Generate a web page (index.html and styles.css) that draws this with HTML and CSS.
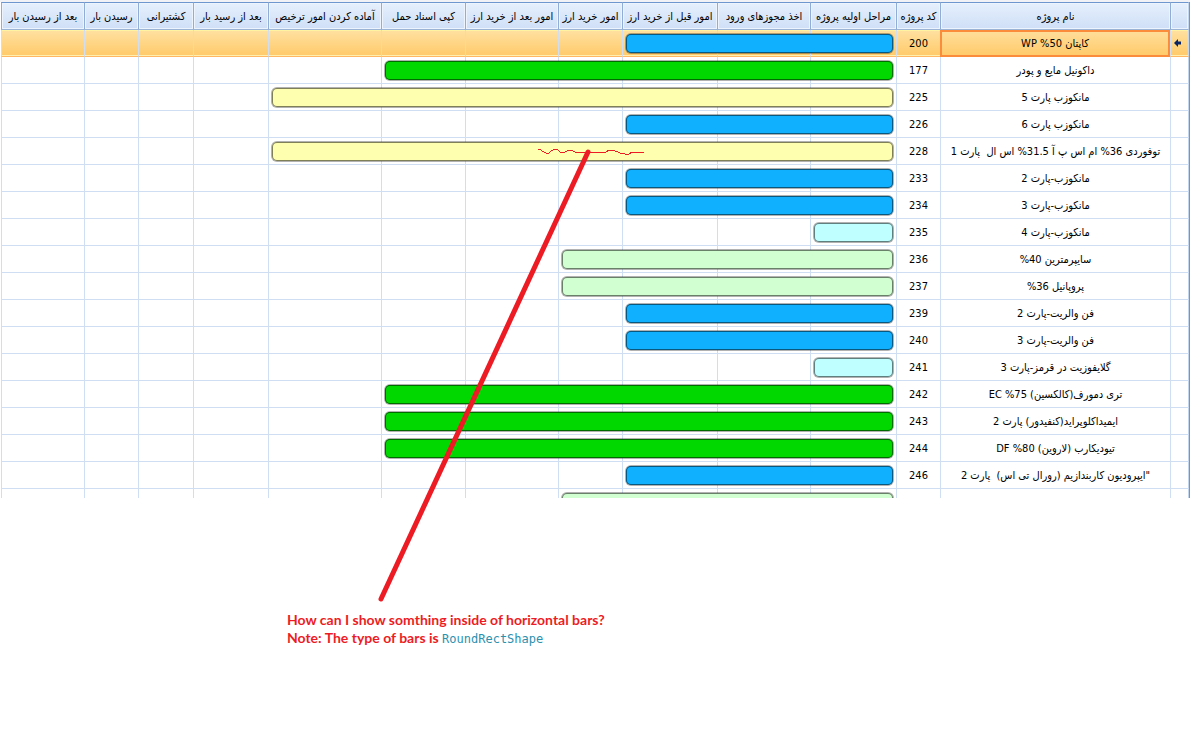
FILE: index.html
```
<!DOCTYPE html>
<html lang="fa">
<head>
<meta charset="utf-8">
<title>مراحل پروژه</title>
<link rel="stylesheet" href="styles.css">
</head>
<body>
<main class="page">
<div class="grid-view">
<table class="grid" dir="rtl">
<colgroup>
<col class="c-mark"><col class="c-name"><col class="c-code"><col class="c-s1"><col class="c-s2"><col class="c-s3"><col class="c-s4"><col class="c-s5"><col class="c-s6"><col class="c-s7"><col class="c-s8"><col class="c-s9"><col class="c-s10"><col class="c-s11">
</colgroup>
<thead>
<tr><th></th><th scope="col">نام پروژه</th><th scope="col">کد پروژه</th><th scope="col">مراحل اولیه پروژه</th><th scope="col">اخذ مجوزهای ورود</th><th scope="col">امور قبل از خرید ارز</th><th scope="col">امور خرید ارز</th><th scope="col">امور بعد از خرید ارز</th><th scope="col">کپی اسناد حمل</th><th scope="col">آماده کردن امور ترخیص</th><th scope="col">بعد از رسید بار</th><th scope="col">کشتیرانی</th><th scope="col">رسیدن بار</th><th scope="col">بعد از رسیدن بار</th></tr>
</thead>
<tbody>
<tr class="selected"><td><svg class="marker" viewBox="0 0 7 8" width="7" height="8"><path d="M0 4L4 0V2.500H7V5.500H4V8Z" fill="#0a2463"/></svg></td><td class="current">کاپتان 50% WP</td><td>200</td><td class="stage"><div class="bar blue"></div></td><td></td><td></td><td></td><td></td><td></td><td></td><td></td><td></td><td></td><td></td></tr>
<tr><td></td><td>داکونیل مایع و پودر</td><td>177</td><td class="stage"><div class="bar green"></div></td><td></td><td></td><td></td><td></td><td></td><td></td><td></td><td></td><td></td><td></td></tr>
<tr><td></td><td>مانکوزب پارت 5</td><td>225</td><td class="stage"><div class="bar yellow"></div></td><td></td><td></td><td></td><td></td><td></td><td></td><td></td><td></td><td></td><td></td></tr>
<tr><td></td><td>مانکوزب پارت 6</td><td>226</td><td class="stage"><div class="bar blue"></div></td><td></td><td></td><td></td><td></td><td></td><td></td><td></td><td></td><td></td><td></td></tr>
<tr><td></td><td>توفوردی 36% ام اس پ آ 31.5% اس ال &nbsp;پارت 1</td><td>228</td><td class="stage"><div class="bar yellow"></div></td><td></td><td></td><td></td><td></td><td></td><td></td><td></td><td></td><td></td><td></td></tr>
<tr><td></td><td>مانکوزب-پارت 2</td><td>233</td><td class="stage"><div class="bar blue"></div></td><td></td><td></td><td></td><td></td><td></td><td></td><td></td><td></td><td></td><td></td></tr>
<tr><td></td><td>مانکوزب-پارت 3</td><td>234</td><td class="stage"><div class="bar blue"></div></td><td></td><td></td><td></td><td></td><td></td><td></td><td></td><td></td><td></td><td></td></tr>
<tr><td></td><td>مانکوزب-پارت 4</td><td>235</td><td class="stage"><div class="bar cyan"></div></td><td></td><td></td><td></td><td></td><td></td><td></td><td></td><td></td><td></td><td></td></tr>
<tr><td></td><td>سایپرمترین 40%</td><td>236</td><td class="stage"><div class="bar mint"></div></td><td></td><td></td><td></td><td></td><td></td><td></td><td></td><td></td><td></td><td></td></tr>
<tr><td></td><td>پروپانیل 36%</td><td>237</td><td class="stage"><div class="bar mint"></div></td><td></td><td></td><td></td><td></td><td></td><td></td><td></td><td></td><td></td><td></td></tr>
<tr><td></td><td>فن والریت-پارت 2</td><td>239</td><td class="stage"><div class="bar blue"></div></td><td></td><td></td><td></td><td></td><td></td><td></td><td></td><td></td><td></td><td></td></tr>
<tr><td></td><td>فن والریت-پارت 3</td><td>240</td><td class="stage"><div class="bar blue"></div></td><td></td><td></td><td></td><td></td><td></td><td></td><td></td><td></td><td></td><td></td></tr>
<tr><td></td><td>گلایفوزیت در قرمز-پارت 3</td><td>241</td><td class="stage"><div class="bar cyan"></div></td><td></td><td></td><td></td><td></td><td></td><td></td><td></td><td></td><td></td><td></td></tr>
<tr><td></td><td>تری دمورف(کالکسین) 75% EC</td><td>242</td><td class="stage"><div class="bar green"></div></td><td></td><td></td><td></td><td></td><td></td><td></td><td></td><td></td><td></td><td></td></tr>
<tr><td></td><td>ایمیداکلوپراید(کنفیدور) پارت 2</td><td>243</td><td class="stage"><div class="bar green"></div></td><td></td><td></td><td></td><td></td><td></td><td></td><td></td><td></td><td></td><td></td></tr>
<tr><td></td><td>تیودیکارب (لاروین) 80% DF</td><td>244</td><td class="stage"><div class="bar green"></div></td><td></td><td></td><td></td><td></td><td></td><td></td><td></td><td></td><td></td><td></td></tr>
<tr><td></td><td>"ایپرودیون کاربندازیم (رورال تی اس) &nbsp;پارت 2</td><td>246</td><td class="stage"><div class="bar blue"></div></td><td></td><td></td><td></td><td></td><td></td><td></td><td></td><td></td><td></td><td></td></tr>
<tr><td></td><td></td><td></td><td class="stage"><div class="bar mint"></div></td><td></td><td></td><td></td><td></td><td></td><td></td><td></td><td></td><td></td><td></td></tr>
</tbody>
</table>
</div>
<section class="note" lang="en">
<p>How can I show somthing inside of horizontal bars?</p>
<p>Note: The type of bars is <code>RoundRectShape</code></p>
</section>
<svg class="pointer" width="700" height="610" viewBox="0 0 700 610" fill="none" stroke="#ed1c24">
<path d="M588 152L381 599" stroke-width="5" stroke-linecap="round"/>
<path shape-rendering="crispEdges" d="M538 149H540L542 151L546 153H549L551 151L555 149H557L560 152H565L569 150H571L575 152H606L609 150H613L620 153L625 154H629L632 152H644"/>
</svg>
</main>
</body>
</html>
```
FILE: styles.css
```
body {
  margin: 0;
  background: #fff;
  color: #000;
}

.page {
  position: relative;
}

/* Visible area of the grid; the rows continue below its edge */
.grid-view {
  box-sizing: border-box;
  height: 498px;
  overflow: hidden;
  padding: 2px 0 0 1px;
  background: linear-gradient(#f0f2f5 2px, #fff 2px);
}

.grid {
  width: 100%;
  table-layout: fixed;
  border-collapse: separate;
  border-spacing: 0;
  border-right: 1px solid #6f97cf;
  font: 11px/14px "DejaVu Sans Condensed", "DejaVu Sans", sans-serif;
  text-align: center;
  white-space: nowrap;
}

.c-mark { width: 19px; }
.c-name { width: 230px; }
.c-code { width: 44px; }
.c-s1 { width: 86px; }
.c-s2 { width: 93px; }
.c-s3 { width: 95px; }
.c-s4 { width: 64px; }
.c-s5 { width: 93px; }
.c-s6 { width: 84px; }
.c-s7 { width: 113px; }
.c-s8 { width: 75px; }
.c-s9 { width: 55px; }
.c-s10 { width: 54px; }
.c-s11 { width: 83px; }

.grid th,
.grid td {
  box-sizing: border-box;
  height: 27px;
  padding: 0;
  border-left: 1px solid #d0def4;
  border-bottom: 1px solid #d0def4;
}

.grid td {
  padding-top: 1px;
}

.grid th {
  height: 28px;
  padding-top: 1px;
  border-top: 1px solid #6f97cf;
  border-left-color: #8fadd6;
  border-bottom-color: #9bb4d5;
  background: linear-gradient(#e6f0fd, #cfdff7);
  box-shadow: inset 0 0 0 1px #edf4fd;
  font-weight: normal;
}

.grid th:first-child,
.grid td:first-child {
  border-right: 1px solid #c3d6f0;
}

.selected td {
  border-bottom-color: #ffb763;
  background: linear-gradient(#fff2a0 1px, #ffe0a0 1px, #ffcb6b 25px, #fff0b0 25px);
}

.grid .current {
  padding: 0;
  border: 2px solid #fb8c3c;
  background: linear-gradient(#ffdd99, #ffcb6b);
}

.marker {
  display: block;
  margin: 0 auto 2px 3px;
}

.stage {
  position: relative;
}

/* --span: bar length in widths of the first stage column */
.bar {
  position: absolute;
  z-index: 1;
  top: 3px;
  right: 2px;
  box-sizing: border-box;
  width: calc((100% + 1px) * var(--span) - 5px);
  height: 21px;
  border: 1px solid rgba(0, 0, 0, 0.3);
  border-radius: 6px;
  background: var(--fill);
  background-clip: padding-box;
  box-shadow: inset 0 0 0 1px var(--edge);
}

.cyan { --span: 1; --fill: #bfffff; --edge: #608080; }
.blue { --span: calc(274 / 86); --fill: #10b0ff; --edge: #085880; }
.mint { --span: calc(338 / 86); --fill: #d2ffd2; --edge: #698069; }
.green { --span: calc(515 / 86); --fill: #00d800; --edge: #006c00; }
.yellow { --span: calc(628 / 86); --fill: #ffffb0; --edge: #808058; }

.note {
  padding: 113px 0 0 287px;
  color: #ed1c24;
  font: bold 14px/18px Lato, sans-serif;
}

.note p {
  margin: 0;
}

.note code {
  color: #2b91af;
  font: 12px/18px "DejaVu Sans Mono", monospace;
}

.pointer {
  position: absolute;
  z-index: 2;
  top: 0;
  left: 0;
  pointer-events: none;
}
```
